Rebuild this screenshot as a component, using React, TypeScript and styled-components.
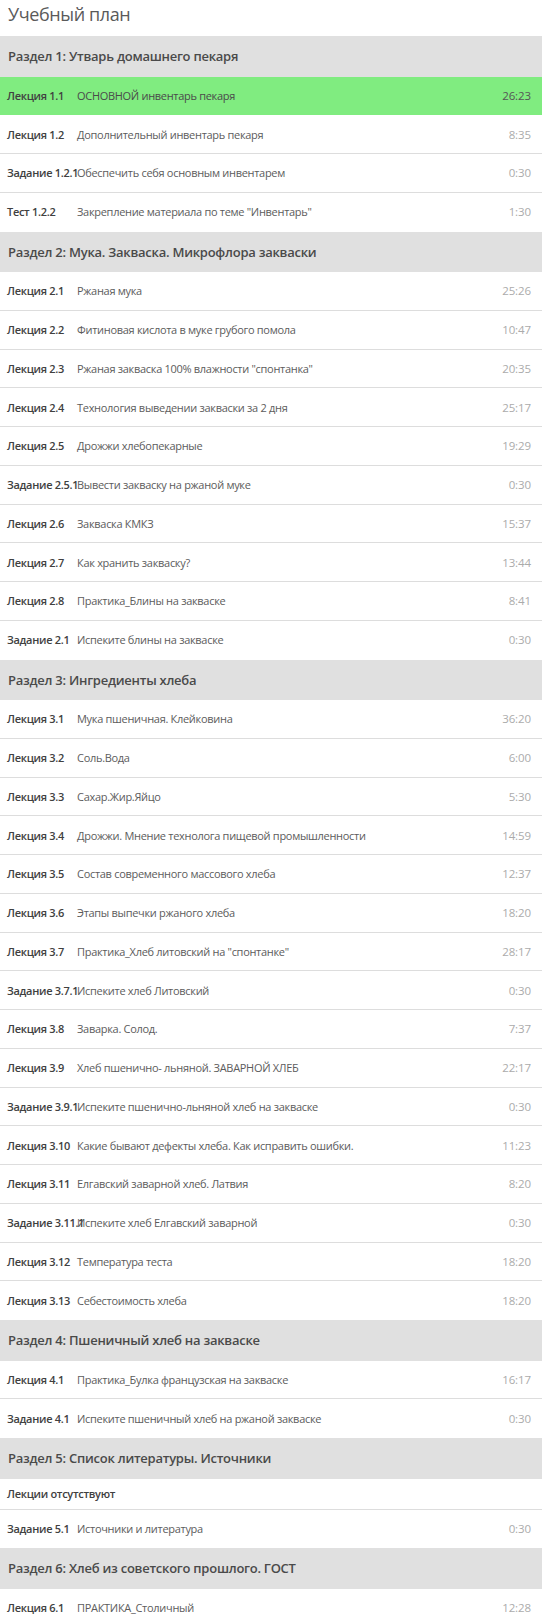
import React from "react";
import styled, { createGlobalStyle } from "styled-components";

const GlobalStyle = createGlobalStyle`
  html, body {
    margin: 0;
    padding: 0;
    background: #ffffff;
  }
  body {
    font-family: "Open Sans", "Noto Sans", "DejaVu Sans", sans-serif;
    -webkit-font-smoothing: antialiased;
  }
`;

type Lesson = { label: string; title: string; time?: string; active?: boolean };
type Section = { title: string; lessons: Lesson[]; empty?: boolean };

const sections: Section[] = [
  {
    title: "Раздел 1: Утварь домашнего пекаря",
    lessons: [
      { label: "Лекция 1.1", title: "ОСНОВНОЙ инвентарь пекаря", time: "26:23", active: true },
      { label: "Лекция 1.2", title: "Дополнительный инвентарь пекаря", time: "8:35" },
      { label: "Задание 1.2.1", title: "Обеспечить себя основным инвентарем", time: "0:30" },
      { label: "Тест 1.2.2", title: "Закрепление материала по теме \"Инвентарь\"", time: "1:30" },
    ],
  },
  {
    title: "Раздел 2: Мука. Закваска. Микрофлора закваски",
    lessons: [
      { label: "Лекция 2.1", title: "Ржаная мука", time: "25:26" },
      { label: "Лекция 2.2", title: "Фитиновая кислота в муке грубого помола", time: "10:47" },
      { label: "Лекция 2.3", title: "Ржаная закваска 100% влажности \"спонтанка\"", time: "20:35" },
      { label: "Лекция 2.4", title: "Технология выведении закваски за 2 дня", time: "25:17" },
      { label: "Лекция 2.5", title: "Дрожжи хлебопекарные", time: "19:29" },
      { label: "Задание 2.5.1", title: "Вывести закваску на ржаной муке", time: "0:30" },
      { label: "Лекция 2.6", title: "Закваска КМКЗ", time: "15:37" },
      { label: "Лекция 2.7", title: "Как хранить закваску?", time: "13:44" },
      { label: "Лекция 2.8", title: "Практика_Блины на закваске", time: "8:41" },
      { label: "Задание 2.1", title: "Испеките блины на закваске", time: "0:30" },
    ],
  },
  {
    title: "Раздел 3: Ингредиенты хлеба",
    lessons: [
      { label: "Лекция 3.1", title: "Мука пшеничная. Клейковина", time: "36:20" },
      { label: "Лекция 3.2", title: "Соль.Вода", time: "6:00" },
      { label: "Лекция 3.3", title: "Сахар.Жир.Яйцо", time: "5:30" },
      { label: "Лекция 3.4", title: "Дрожжи. Мнение технолога пищевой промышленности", time: "14:59" },
      { label: "Лекция 3.5", title: "Состав современного массового хлеба", time: "12:37" },
      { label: "Лекция 3.6", title: "Этапы выпечки ржаного хлеба", time: "18:20" },
      { label: "Лекция 3.7", title: "Практика_Хлеб литовский на \"спонтанке\"", time: "28:17" },
      { label: "Задание 3.7.1", title: "Испеките хлеб Литовский", time: "0:30" },
      { label: "Лекция 3.8", title: "Заварка. Солод.", time: "7:37" },
      { label: "Лекция 3.9", title: "Хлеб пшенично- льняной. ЗАВАРНОЙ ХЛЕБ", time: "22:17" },
      { label: "Задание 3.9.1", title: "Испеките пшенично-льняной хлеб на закваске", time: "0:30" },
      { label: "Лекция 3.10", title: "Какие бывают дефекты хлеба. Как исправить ошибки.", time: "11:23" },
      { label: "Лекция 3.11", title: "Елгавский заварной хлеб. Латвия", time: "8:20" },
      { label: "Задание 3.11.1", title: "Испеките хлеб Елгавский заварной", time: "0:30" },
      { label: "Лекция 3.12", title: "Температура теста", time: "18:20" },
      { label: "Лекция 3.13", title: "Себестоимость хлеба", time: "18:20" },
    ],
  },
  {
    title: "Раздел 4: Пшеничный хлеб на закваске",
    lessons: [
      { label: "Лекция 4.1", title: "Практика_Булка французская на закваске", time: "16:17" },
      { label: "Задание 4.1", title: "Испеките пшеничный хлеб на ржаной закваске", time: "0:30" },
    ],
  },
  {
    title: "Раздел 5: Список литературы. Источники",
    empty: true,
    lessons: [{ label: "Задание 5.1", title: "Источники и литература", time: "0:30" }],
  },
  {
    title: "Раздел 6: Хлеб из советского прошлого. ГОСТ",
    lessons: [{ label: "Лекция 6.1", title: "ПРАКТИКА_Столичный", time: "12:28" }],
  },
];

const Page = styled.div`
  width: 542px;
  background: #fff;
`;

const PageTitle = styled.h2`
  margin: 0;
  height: 36px;
  box-sizing: border-box;
  padding: 0 8px 8px;
  font-size: 18px;
  line-height: 28px;
  font-weight: 400;
  color: #5a5a5a;
  letter-spacing: -0.4px;
`;

const SectionHeader = styled.div`
  height: 40.5px;
  box-sizing: border-box;
  padding: 0 8px;
  background: #e0e0e0;
  font-size: 13px;
  line-height: 40.5px;
  font-weight: 600;
  color: #4a4a4a;
  letter-spacing: -0.25px;
  white-space: nowrap;
`;

const List = styled.div`
  display: flex;
  flex-direction: column;
`;

const Row = styled.div<{ $active?: boolean }>`
  display: flex;
  align-items: center;
  height: 38.75px;
  box-sizing: border-box;
  padding: 0 11px 0 7px;
  background: ${(p) => (p.$active ? "#80ec80" : "#ffffff")};
  border-bottom: 1px solid ${(p) => (p.$active ? "#80ec80" : "#dddddd")};
  font-size: 11px;
  white-space: nowrap;
  &:last-child {
    border-bottom-color: ${(p) => (p.$active ? "#80ec80" : "#ffffff")};
  }
`;

const Label = styled.span`
  flex: 0 0 70px;
  width: 70px;
  font-weight: 600;
  color: #404040;
  letter-spacing: -0.3px;
  overflow: visible;
`;

const LessonTitle = styled.span<{ $active?: boolean }>`
  flex: 1 1 auto;
  color: ${(p) => (p.$active ? "#4a4a4a" : "#5c5c5c")};
  letter-spacing: -0.3px;
`;

const Time = styled.span<{ $active?: boolean }>`
  flex: 0 0 auto;
  color: ${(p) => (p.$active ? "#555555" : "#ababab")};
  font-size: 11.5px;
  letter-spacing: -0.1px;
`;

const EmptyRow = styled.div`
  height: 31px;
  box-sizing: border-box;
  padding: 0 7px;
  border-bottom: 1px solid #dddddd;
  font-size: 11px;
  line-height: 30px;
  font-weight: 600;
  color: #404040;
  letter-spacing: -0.3px;
`;

export default function App() {
  return (
    <Page>
      <GlobalStyle />
      <PageTitle>Учебный план</PageTitle>
      {sections.map((s) => (
        <section key={s.title}>
          <SectionHeader>{s.title}</SectionHeader>
          <List>
            {s.empty && <EmptyRow>Лекции отсутствуют</EmptyRow>}
            {s.lessons.map((l) => (
              <Row key={l.label} $active={l.active}>
                <Label>{l.label}</Label>
                <LessonTitle $active={l.active}>{l.title}</LessonTitle>
                <Time $active={l.active}>{l.time}</Time>
              </Row>
            ))}
          </List>
        </section>
      ))}
    </Page>
  );
}
